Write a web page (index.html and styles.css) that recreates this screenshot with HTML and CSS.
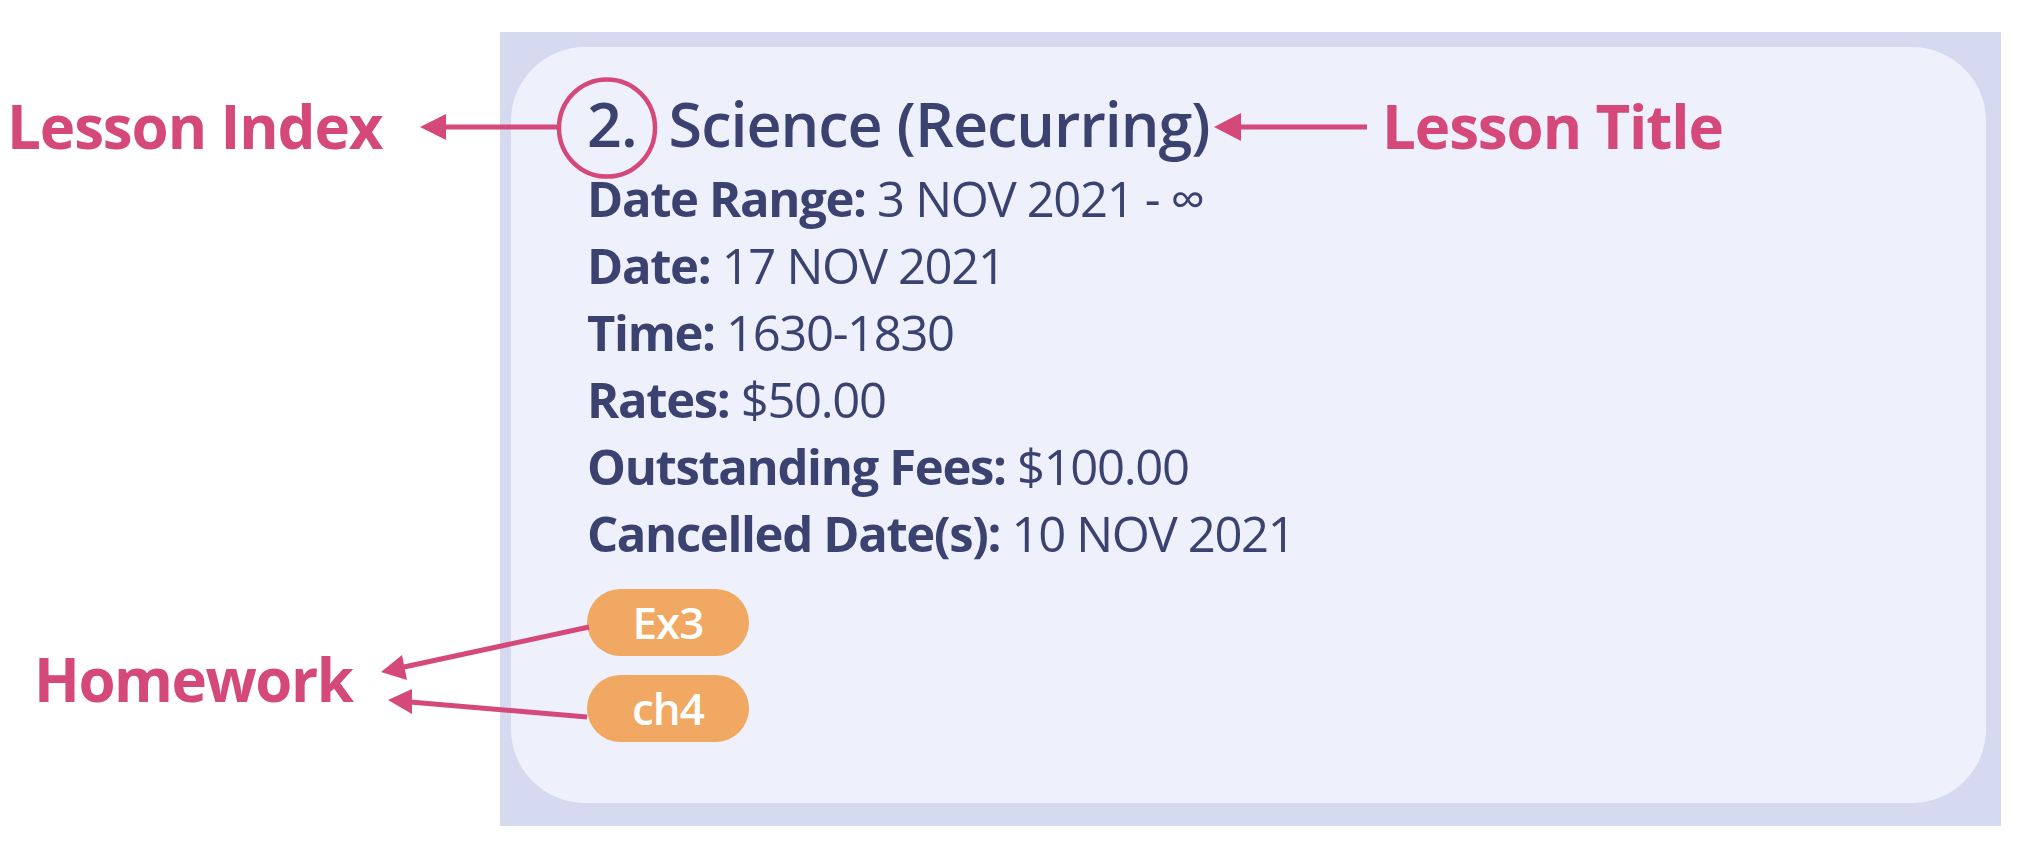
FILE: index.html
```html
<!DOCTYPE html>
<html>
<head>
<meta charset="utf-8">
<link rel="stylesheet" href="styles.css">
</head>
<body>
<div class="stage">
  <div class="panel">
    <div class="card">
      <div class="title"><span class="index">2.</span><span class="name">Science (Recurring)</span></div>
      <div class="row"><b>Date Range:</b> 3 NOV 2021 - ∞</div>
      <div class="row"><b>Date:</b> 17 NOV 2021</div>
      <div class="row"><b>Time:</b> 1630-1830</div>
      <div class="row"><b>Rates:</b> $50.00</div>
      <div class="row"><b>Outstanding Fees:</b> $100.00</div>
      <div class="row"><b>Cancelled Date(s):</b> 10 NOV 2021</div>
      <div class="tags">
        <span class="tag">Ex3</span>
        <span class="tag">ch4</span>
      </div>
    </div>
  </div>

  <div class="note note-index">Lesson Index</div>
  <div class="note note-title">Lesson Title</div>
  <div class="note note-hw">Homework</div>

  <svg class="marks" width="2018" height="848" viewBox="0 0 2018 848">
    <g fill="#d5497a" stroke="#d5497a">
      <ellipse cx="607" cy="128" rx="48" ry="48.5" fill="none" stroke-width="4.5"/>
      <line x1="558" y1="127" x2="442" y2="127" stroke-width="5"/>
      <polygon points="420,127 446,114 446,140" stroke="none"/>
      <line x1="1367" y1="127" x2="1238" y2="127" stroke-width="5"/>
      <polygon points="1214,127 1241,113 1241,141" stroke="none"/>
      <line x1="589" y1="627" x2="404" y2="667" stroke-width="5"/>
      <polygon points="381,672 402,655 407,680" stroke="none"/>
      <line x1="587" y1="717" x2="410" y2="702" stroke-width="5"/>
      <polygon points="388,700 412,689 412,714" stroke="none"/>
    </g>
  </svg>
</div>
</body>
</html>
```

FILE: styles.css
```css
html, body {
  margin: 0;
  padding: 0;
  background: #ffffff;
}

.stage {
  position: relative;
  width: 2018px;
  height: 848px;
  overflow: hidden;
  font-family: "Open Sans", "Noto Sans", sans-serif;
}

.panel {
  box-sizing: border-box;
  width: 1501px;
  height: 794px;
  margin-left: 500px;
  padding: 15px 15px 23px 11px;
  background: #d6daf0;
  position: relative;
  top: 32px;
}

.card {
  box-sizing: border-box;
  height: 100%;
  background: #eef1fc;
  border-radius: 74px;
  padding: 35px 40px 0 76px;
  color: #3c4270;
}

.title {
  display: flex;
  gap: 32px;
  font-size: 61px;
  font-weight: 600;
  line-height: 83px;
  white-space: nowrap;
  letter-spacing: -1px;
}

.row {
  font-size: 49px;
  line-height: 67px;
  font-weight: 400;
  white-space: nowrap;
  letter-spacing: -1.35px;
}

.row b {
  font-weight: 700;
}

.tags {
  display: flex;
  flex-direction: column;
  align-items: flex-start;
  gap: 19px;
  margin-top: 22px;
}

.tag {
  box-sizing: border-box;
  width: 162px;
  height: 67px;
  border-radius: 34px;
  background: #f0a862;
  color: #ffffff;
  font-size: 44px;
  font-weight: 600;
  line-height: 67px;
  text-align: center;
  letter-spacing: -1px;
}

.note {
  position: absolute;
  color: #d5497a;
  font-size: 60px;
  font-weight: 700;
  line-height: 82px;
  white-space: nowrap;
  letter-spacing: -1.1px;
}

.note-index { left: 7px; top: 85px; }
.note-title { left: 1382px; top: 85px; }
.note-hw { left: 34px; top: 638px; letter-spacing: -1.5px; }

.marks {
  position: absolute;
  left: 0;
  top: 0;
  pointer-events: none;
}
```
